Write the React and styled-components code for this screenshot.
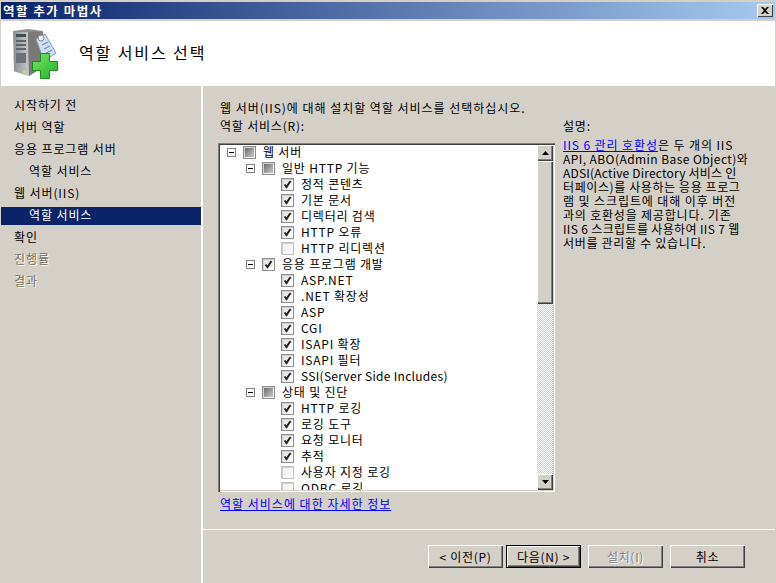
import React from "react";
import styled, { createGlobalStyle } from "styled-components";

const GlobalStyle = createGlobalStyle`
  html, body {
    margin: 0;
    padding: 0;
    background: #d4d0c8;
  }
  * {
    box-sizing: border-box;
  }
`;

const Win = styled.div`
  width: 776px;
  height: 583px;
  display: flex;
  flex-direction: column;
  overflow: hidden;
  background: #d4d0c8;
  padding: 2px 1px 0 1px;
  color: #000;
  font-family: "Noto Sans CJK KR", "Liberation Sans", sans-serif;
  font-size: 12px;
`;

const TitleBar = styled.div`
  height: 17px;
  flex: none;
  display: flex;
  align-items: center;
  justify-content: space-between;
  padding: 0 2px 0 2px;
  background: linear-gradient(90deg, #0a246a 0%, #a6caf0 100%);
  color: #fff;
  font-size: 12.5px;
  font-weight: 700;
  letter-spacing: 1.5px;
`;

const CloseBtn = styled.div`
  width: 16px;
  height: 13px;
  display: flex;
  align-items: center;
  justify-content: center;
  background: #d4d0c8;
  box-shadow: inset 1px 1px 0 #fff, inset -1px -1px 0 #404040;
`;

const Header = styled.div`
  height: 65px;
  flex: none;
  margin-top: 2px;
  display: flex;
  align-items: center;
  gap: 20px;
  padding-left: 12px;
  background: #fff;
`;

const HeaderTitle = styled.div`
  font-size: 16px;
  letter-spacing: 1.9px;
  margin-top: -3px;
`;

const Body = styled.div`
  flex: 1;
  min-height: 0;
  display: flex;
`;

const Side = styled.div`
  width: 200px;
  flex: none;
  padding-top: 11px;
  display: flex;
  flex-direction: column;
  gap: 4px;
`;

const StepRow = styled.div`
  height: 18px;
  line-height: 16px;
  padding-left: ${(p) => (p.$sub ? 28 : 13)}px;
  letter-spacing: 0.9px;
  white-space: nowrap;
  background: ${(p) => (p.$active ? "#0a246a" : "transparent")};
  color: ${(p) => (p.$active ? "#fff" : p.$muted ? "#716f64" : "#000")};
  text-shadow: ${(p) => (p.$muted ? "1px 1px 0 #fff" : "none")};
`;

const Main = styled.div`
  flex: 1;
  min-width: 0;
  border-left: 2px solid #fff;
  display: flex;
  flex-direction: column;
`;

const Content = styled.div`
  height: 443px;
  flex: none;
  padding: 14px 0 0 17px;
`;

const Intro = styled.div`
  height: 18px;
  line-height: 16px;
  letter-spacing: 0.97px;
  white-space: nowrap;
`;

const Columns = styled.div`
  display: flex;
`;

const LeftCol = styled.div`
  width: 343px;
  flex: none;
`;

const Label = styled.div`
  height: ${(p) => p.$height}px;
  line-height: 15px;
  letter-spacing: 0.8px;
`;

const ListBox = styled.div`
  width: 337px;
  height: 349px;
  display: flex;
  margin: 0 0 3px -2px;
  padding: 1px 2px 2px;
  background: #fff;
  box-shadow: inset 1px 1px 0 #808080, inset 2px 2px 0 #404040, inset -1px -1px 0 #fff, inset -2px -2px 0 #d4d0c8;
`;

const TreeArea = styled.div`
  flex: 1;
  min-width: 0;
  overflow: hidden;
`;

const TreeRow = styled.div`
  height: 16px;
  display: flex;
  align-items: center;
  padding-left: ${(p) => 7 + (p.$level - 1) * 19}px;
  white-space: nowrap;
`;

const Expander = styled.span`
  width: 9px;
  height: 9px;
  flex: none;
  position: relative;
  border: 1px solid #808080;
  background: #fff;
  margin-right: 7px;

  &::after {
    content: "";
    position: absolute;
    left: 1px;
    top: 3px;
    width: 5px;
    height: 1px;
    background: #000;
  }
`;

const CheckBox = styled.span`
  width: 13px;
  height: 13px;
  flex: none;
  display: flex;
  align-items: center;
  justify-content: center;
  margin-left: ${(p) => (p.$leaf ? 16 : 0)}px;
  border: 1px solid ${(p) => (p.$off ? "#c4c2bd" : "#8e8e8e")};
  box-shadow: inset 1px 1px 0 #d0d0d0;
  background: ${(p) => (p.$off ? "linear-gradient(135deg, #ecebe9, #fff)" : "linear-gradient(135deg, #e2e0dc, #fff)")};
`;

const MixedFill = styled.span`
  width: 9px;
  height: 9px;
  background: linear-gradient(135deg, #6a6a6a, #cacaca);
`;

const RowText = styled.span`
  margin-left: 7px;
  line-height: 16px;
  letter-spacing: ${(p) => p.$spacing}px;
`;

const ScrollBar = styled.div`
  width: 16px;
  flex: none;
  margin-top: 1px;
  display: flex;
  flex-direction: column;
  background-color: #fff;
  background-image: conic-gradient(#d4d0c8 25%, #fff 0 50%, #d4d0c8 0 75%, #fff 0);
  background-size: 2px 2px;
`;

const ScrollBtn = styled.div`
  height: 16px;
  flex: none;
  display: flex;
  align-items: center;
  justify-content: center;
  background: #d4d0c8;
  box-shadow: inset 1px 1px 0 #fff, inset -1px -1px 0 #404040, inset -2px -2px 0 #808080;
`;

const ScrollThumb = styled.div`
  height: 143px;
  flex: none;
  background: #d4d0c8;
  box-shadow: inset 1px 1px 0 #fff, inset -1px -1px 0 #404040, inset -2px -2px 0 #808080;
`;

const ScrollTrack = styled.div`
  flex: 1;
`;

const Link = styled.a`
  color: #0000ff;
  text-decoration: underline;
`;

const MoreLink = styled(Link)`
  display: block;
  line-height: 17px;
  letter-spacing: 1px;
`;

const RightCol = styled.div`
  width: 200px;
  flex: none;
`;

const DescLine = styled.div`
  height: 14px;
  line-height: 14px;
  letter-spacing: ${(p) => p.$spacing}px;
  white-space: pre;
`;

const Footer = styled.div`
  flex: 1;
  border-top: 1px solid #fff;
  display: flex;
  justify-content: flex-end;
  gap: 7px;
  padding: 15px 30px 0 0;
`;

const WizBtn = styled.div`
  width: 75px;
  height: 23px;
  display: flex;
  align-items: center;
  justify-content: center;
  letter-spacing: 0.7px;
  background: #d4d0c8;
  margin-left: ${(p) => (p.$tight ? -4 : 0)}px;
  color: ${(p) => (p.$disabled ? "#808080" : "#000")};
  text-shadow: ${(p) => (p.$disabled ? "1px 1px 0 #fff" : "none")};
  box-shadow: ${(p) =>
    p.$default
      ? "inset 0 0 0 1px #000, inset 2px 2px 0 #fff, inset -2px -2px 0 #404040, inset -3px -3px 0 #808080"
      : "inset 1px 1px 0 #fff, inset -1px -1px 0 #404040, inset -2px -2px 0 #808080"};
`;

const steps = [
  { label: "시작하기 전" },
  { label: "서버 역할" },
  { label: "응용 프로그램 서버" },
  { label: "역할 서비스", sub: true },
  { label: "웹 서버(IIS)" },
  { label: "역할 서비스", sub: true, active: true },
  { label: "확인" },
  { label: "진행률", muted: true },
  { label: "결과", muted: true },
];

// level 1/2 rows have an expander, level 3 are plain leaves
const tree = [
  { level: 1, state: "mixed", label: "웹 서버" },
  { level: 2, state: "mixed", label: "일반 HTTP 기능" },
  { level: 3, state: "on", label: "정적 콘텐츠" },
  { level: 3, state: "on", label: "기본 문서" },
  { level: 3, state: "on", label: "디렉터리 검색" },
  { level: 3, state: "on", label: "HTTP 오류" },
  { level: 3, state: "off", label: "HTTP 리디렉션" },
  { level: 2, state: "on", label: "응용 프로그램 개발" },
  { level: 3, state: "on", label: "ASP.NET" },
  { level: 3, state: "on", label: ".NET 확장성" },
  { level: 3, state: "on", label: "ASP" },
  { level: 3, state: "on", label: "CGI" },
  { level: 3, state: "on", label: "ISAPI 확장" },
  { level: 3, state: "on", label: "ISAPI 필터" },
  { level: 3, state: "on", label: "SSI(Server Side Includes)", spacing: 0.3 },
  { level: 2, state: "mixed", label: "상태 및 진단" },
  { level: 3, state: "on", label: "HTTP 로깅" },
  { level: 3, state: "on", label: "로깅 도구" },
  { level: 3, state: "on", label: "요청 모니터" },
  { level: 3, state: "on", label: "추적" },
  { level: 3, state: "off", label: "사용자 지정 로깅" },
  { level: 3, state: "off", label: "ODBC 로깅" },
];

// latin runs are narrower in the original font, so each line gets its own tracking
const descLines = [
  { text: "은 두 개의 IIS", spacing: 0.9, link: "IIS 6 관리 호환성" },
  { text: "API, ABO(Admin Base Object)와", spacing: 0.43 },
  { text: "ADSI(Active Directory 서비스 인", spacing: 0.2 },
  { text: "터페이스)를 사용하는 응용 프로그", spacing: 0.6 },
  { text: "램 및 스크립트에 대해 이후 버전", spacing: 0.9 },
  { text: "과의 호환성을 제공합니다. 기존", spacing: 0.8 },
  { text: "IIS 6 스크립트를 사용하여 IIS 7 웹", spacing: 0.35 },
  { text: "서버를 관리할 수 있습니다.", spacing: 0.7 },
];

const ServerIcon = () => (
  <svg width="46" height="50" viewBox="0 0 46 50">
    <defs>
      <linearGradient id="srvFront" x1="0" x2="1" y1="0" y2="0">
        <stop offset="0" stopColor="#8d9296" />
        <stop offset="1" stopColor="#c7cbcd" />
      </linearGradient>
      <linearGradient id="plusFill" x1="0" x2="1" y1="0" y2="1">
        <stop offset="0" stopColor="#7ee562" />
        <stop offset="1" stopColor="#1fb02a" />
      </linearGradient>
    </defs>
    <polygon points="0,2 15,0 30,2 30,38 16,47 1,42" fill="#8f8f8c" />
    <polygon points="1,3 15,3 16,47 1,42" fill="url(#srvFront)" />
    <polygon points="15,3 30,3 30,38 16,47" fill="#7a7976" />
    <rect x="3" y="5" width="10" height="3" fill="#3d4e50" />
    <rect x="3" y="11" width="10" height="2" fill="#5d6468" />
    <rect x="3" y="15" width="10" height="2" fill="#5d6468" />
    <rect x="3" y="19" width="10" height="2" fill="#5d6468" />
    <rect x="3" y="24" width="10" height="10" fill="#6d7276" />
    <rect x="10" y="42" width="2" height="2" fill="#dfe24a" />
    <polygon points="23,10 32,5 43,24 31,32" fill="#cfe0f0" stroke="#7f99b8" />
    <circle cx="28" cy="9" r="3" fill="#e8eef5" stroke="#8a8a8a" />
    <path d="M29 16l6-3M31 20l6-3M33 24l6-3" stroke="#6f8fc4" strokeWidth="1.2" />
    <path
      d="M27.5 24.500h9v8h8v9h-8v8h-9v-8h-8v-9h8z"
      fill="url(#plusFill)"
      stroke="#1d8a22"
    />
  </svg>
);

const CloseGlyph = () => (
  <svg width="8" height="7" viewBox="0 0 8 7">
    <path d="M0 0h2l2 2 2-2h2L5 3.500l3 3.500H6L4 5 2 7H0l3-3.500z" fill="#000" />
  </svg>
);

const CheckGlyph = () => (
  <svg width="9" height="9" viewBox="0 0 9 9">
    <path d="M1.500 4.500L3.500 7 7.500 1" fill="none" stroke="#222" strokeWidth="2" />
  </svg>
);

const Arrow = ({ down }) => (
  <svg width="7" height="4" viewBox="0 0 7 4">
    <polygon points={down ? "0,0 7,0 3.500,4" : "3.500,0 7,4 0,4"} fill="#000" />
  </svg>
);

const TreeItem = ({ level, state, label, spacing = 0.8 }) => (
  <TreeRow $level={level}>
    {level < 3 && <Expander />}
    <CheckBox $leaf={level === 3} $off={state === "off"}>
      {state === "on" && <CheckGlyph />}
      {state === "mixed" && <MixedFill />}
    </CheckBox>
    <RowText $spacing={spacing}>{label}</RowText>
  </TreeRow>
);

const App = () => (
  <Win>
    <GlobalStyle />
    <TitleBar>
      <span>역할 추가 마법사</span>
      <CloseBtn>
        <CloseGlyph />
      </CloseBtn>
    </TitleBar>
    <Header>
      <ServerIcon />
      <HeaderTitle>역할 서비스 선택</HeaderTitle>
    </Header>
    <Body>
      <Side>
        {steps.map((s, i) => (
          <StepRow key={i} $sub={s.sub} $active={s.active} $muted={s.muted}>
            {s.label}
          </StepRow>
        ))}
      </Side>
      <Main>
        <Content>
          <Intro>웹 서버(IIS)에 대해 설치할 역할 서비스를 선택하십시오.</Intro>
          <Columns>
            <LeftCol>
              <Label $height={25}>역할 서비스(R):</Label>
              <ListBox>
                <TreeArea>
                  {tree.map((t, i) => (
                    <TreeItem key={i} {...t} />
                  ))}
                </TreeArea>
                <ScrollBar>
                  <ScrollBtn>
                    <Arrow />
                  </ScrollBtn>
                  <ScrollThumb />
                  <ScrollTrack />
                  <ScrollBtn>
                    <Arrow down />
                  </ScrollBtn>
                </ScrollBar>
              </ListBox>
              <MoreLink>역할 서비스에 대한 자세한 정보</MoreLink>
            </LeftCol>
            <RightCol>
              <Label $height={20}>설명:</Label>
              {descLines.map((l, i) => (
                <DescLine key={i} $spacing={l.spacing}>
                  {l.link && <Link>{l.link}</Link>}
                  {l.text}
                </DescLine>
              ))}
            </RightCol>
          </Columns>
        </Content>
        <Footer>
          <WizBtn>&lt; 이전(P)</WizBtn>
          <WizBtn $default $tight>다음(N) &gt;</WizBtn>
          <WizBtn $disabled>설치(I)</WizBtn>
          <WizBtn>취소</WizBtn>
        </Footer>
      </Main>
    </Body>
  </Win>
);

export default App;
